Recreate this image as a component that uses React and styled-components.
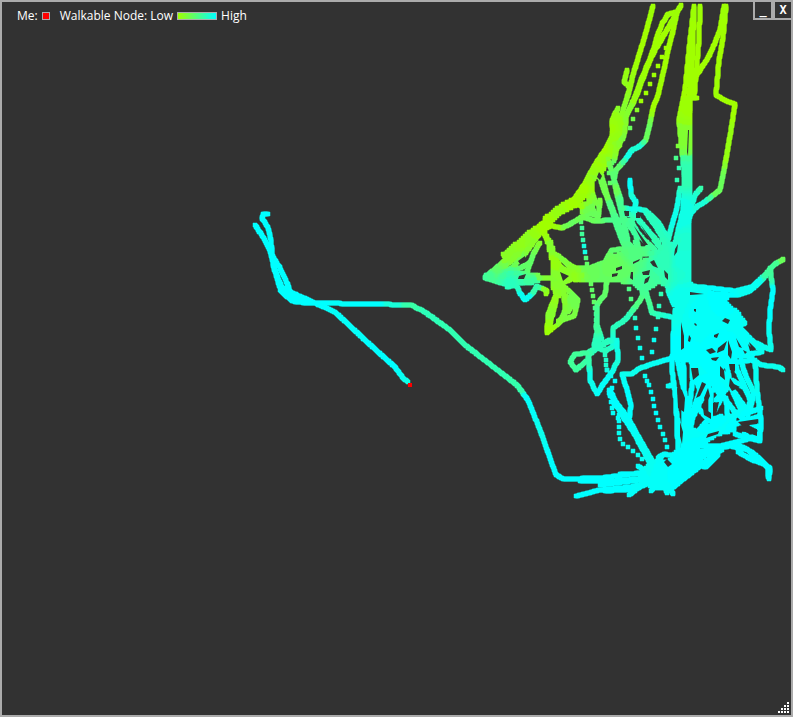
import React from "react";
import styled, { createGlobalStyle } from "styled-components";

const FRAME = "#ababab";
const BACKDROP = "#323232";

/* Height samples on the map: x, y, height (0 = low, 1 = high). */
const HEIGHTS = [
  [653, 50, 0], [690, 50, 0], [725, 50, 0], [735, 104, 0], [727, 150, 0.08], [720, 190, 0.35],
  [700, 205, 0.85], [690, 110, 0.03], [684, 90, 0], [686, 140, 0.2], [686, 170, 0.7], [686, 210, 0.9],
  [670, 215, 0.92], [655, 100, 0], [647, 138, 0.35], [640, 146, 0.85], [628, 155, 0.9],
  [616, 150, 0.12], [606, 150, 0], [615, 165, 0.4],
  [614, 178, 0.45], [612, 130, 0.03], [600, 165, 0.03], [585, 190, 0], [575, 205, 0],
  [545, 225, 0], [520, 245, 0.1], [505, 255, 0.15], [495, 268, 0.4], [485, 277, 0.6],
  [510, 282, 0.75], [525, 299, 0.95], [537, 286, 0.7], [547, 291, 0.1], [545, 277, 0.2],
  [530, 262, 0.4], [556, 262, 0.05], [556, 300, 0.1], [547, 333, 0.02], [575, 300, 0.3],
  [572, 315, 0.25], [562, 258, 0.25], [590, 270, 0.35], [575, 275, 0.1], [590, 215, 0.35],
  [600, 200, 0.25], [610, 190, 0.3], [612, 205, 0.5], [620, 222, 0.55], [630, 182, 0.98], [634, 205, 0.9],
  [584, 232, 0.6], [585, 250, 0.9], [588, 262, 0.4], [595, 290, 0.4], [597, 320, 0.6],
  [600, 345, 0.75], [625, 270, 0.4], [612, 266, 0.35], [640, 255, 0.5], [635, 300, 0.5],
  [625, 320, 0.75], [645, 285, 0.6], [660, 260, 0.72], [680, 260, 0.85], [650, 225, 0.75],
  [680, 300, 0.92], [700, 310, 0.97], [720, 300, 1], [750, 285, 0.95], [772, 265, 0.6],
  [784, 259, 0.35], [772, 300, 1], [576, 355, 0.6], [570, 365, 0.6], [590, 380, 0.92],
  [620, 345, 0.9], [610, 390, 1], [650, 350, 0.95], [636, 330, 0.9], [640, 400, 1],
  [680, 350, 1], [720, 350, 1], [411, 305, 0.65], [425, 312, 0.72], [460, 338, 0.7],
  [395, 305, 0.85], [370, 304, 1], [517, 385, 0.68], [500, 370, 0.7], [480, 355, 0.7],
  [530, 402, 0.98], [300, 300, 1], [270, 230, 1], [380, 355, 1], [560, 470, 1],
  [600, 480, 1], [700, 400, 1], [700, 470, 1], [760, 440, 1],
];

/* Parts so often walked that the nodes form one surface. */
const FIELDS = [
  "683,200 690,200 690,283 705,291 728,295 726,303 738,312 745,323 738,330 742,345 748,356 735,358 722,368 712,372 700,372 690,362 684,362 677,360 674,330 675,312 676,300 668,288 660,282 650,288 640,290 634,284 622,282 605,280 580,282 575,272 600,266 612,256 626,252 640,262 655,256 667,250 678,238",
  "486,275 498,271 525,272 540,275 540,281 530,284 512,284",
  "503,254 530,231 543,222 552,226 543,232 526,244 508,258",
  "543,219 563,203 574,198 586,183 592,180 590,192 576,206 560,214 549,224",
  "543,228 552,243 558,264 562,285 558,300 552,286 552,262",
  "596,164 611,145 613,115 622,113 622,130 616,148 604,170 594,180 584,190",
  "682,120 690,90 691,210 684,210",
  "638,475 652,462 668,462 678,448 694,450 702,456 700,468 688,476 672,484 662,490 650,486",
  "690,360 720,366 728,380 722,400 712,384 704,390 692,378",
  "700,430 722,418 735,418 735,430 715,436 702,446 690,456 684,450",
  "656,222 664,230 670,242 676,252 666,254",
];

/* Small untouched spots inside the walked ground. */
const GAPS = [
  "664,270 668,274 668,280 665,277", "675,249 678,244 677,252 674,256", "642,272 650,270 649,275 643,275",
  "631,272 633,272 633,280 630,278", "645,279 650,276 648,282 644,284",
  "681,322 684,336 684,348 681,350", "689,335 691,338 690,342 688,341", "725,318 730,320 728,324 722,321",
  "714,335 719,333 717,338 714,337", "706,350 712,348 716,352 710,354", "718,348 727,341 724,350 717,353",
  "711,358 719,357 716,361 712,360", "728,340 732,352 731,359 728,355", "691,368 698,368 699,375 693,380",
  "720,366 724,370 725,380 720,376", "694,309 696,309 696,312 694,311", "695,323 697,325 696,326 694,324",
  "667,459 672,464 668,467 664,462", "708,434 719,431 718,434 706,438", "616,268 622,266 622,269 616,271",
  "612,274 618,273 617,276 612,277", "519,276 526,274 524,279 518,279",
  "599,172 602,176 600,180 597,177", "688,130 689,130 688,156 687,152", "650,262 654,260 658,268 653,266",
  "560,272 569,276 563,281", "518,261 525,256 526,262 520,264", "554,318 556,316 556,323 553,325",
  "677,388 682,390 685,398 684,412 678,408", "729,364 735,364 735,371 730,370", "730,378 734,384 740,387 732,391 729,386",
  "702,382 706,384 700,396 696,398", "743,431 757,429 757,436", "738,422 758,419 757,424 742,426",
  "703,408 711,413 711,419 704,415", "713,403 719,402 716,415 713,416",
  "624,211 629,211 629,216 625,216", "636,213 640,213 640,218 636,218", "634,226 648,245 644,245",
  "645,218 655,230 653,231", "640,224 652,240 650,240", "633,262 640,259 639,261 633,264",
  "736,338 742,348 739,347", "748,344 754,350 750,351", "743,350 747,352 745,354",
  "680,422 683,432 682,444 680,436", "708,388 710,396 706,404 704,398", "690,292 704,294 690,295",
];

/* Walked trails, one chain of map positions each. */
const TRAILS = [
  "653,6 647,29 640,52 633,75 628,95 623,110 618,128 612,150", "627,70 624,82 630,87 625,105",
  "681,5 677,12 668,14 662,24 657,37 654,48 648,65 641,80 633,103 625,118 614,142 600,165",
  "677,12 670,25 658,44 650,60 643,78 637,95 625,118 618,135",
  "677,12 664,35 655,50 646,68 638,90 628,112",
  "677,12 672,35 668,50 664,70 658,95 653,108 649,128 646,140 640,146 632,150 625,160 616,170",
  "694,6 689,50 685,90 679,120 682,150 685,180 685,260", "694,6 693,50 689,120 688,180 687,250",
  "694,12 692,60 689,95 689,140 688,240", "700,6 699,40 696,75 694,98 697,98", "694,98 684,98 681,125",
  "724,6 720,30 714,45 708,58 700,70 695,78", "726,6 723,38 719,60 716,95 726,101 735,104 731,130 725,165 720,190 711,197 703,203 695,208 690,215",
  "701,188 695,195 692,205 688,225", "680,188 677,208 672,225 668,240", "686,180 683,210 676,240",
  "618,108 612,120 613,135 605,150 595,165 584,185 575,198 560,212 545,222 533,232 518,245 503,256",
  "626,118 625,130 623,138 617,146 614,162", "620,145 600,165 592,180 592,198 600,206",
  "630,180 631,195 636,202 634,213 632,222", "600,170 607,195 615,215 625,240 632,252 630,265",
  "608,160 613,175 616,190 622,215 628,240", "616,170 614,180 621,200 622,215 636,235 640,258",
  "596,165 604,190 610,205 618,230 627,252", "588,188 590,205 598,218 600,200",
  "620,208 635,209 645,210 658,222 668,238", "622,213 636,216 650,234 662,250", "630,220 640,236 655,250",
  "645,211 670,248", "633,212 640,222 660,244", "582,217 595,221 612,220 622,220 626,224",
  "580,218 590,212 595,200 590,188", "570,202 580,205 588,214 600,215", "576,205 590,204 582,212",
  "543,228 552,226 562,228 572,223 582,217 590,210", "590,195 587,212",
  "485,277 500,265 520,245 543,228", "485,277 510,262 530,240 545,228", "485,277 512,268 526,252 540,233",
  "485,277 500,270 518,255 540,230", "527,272 533,255 540,242", "485,277 520,268 531,262",
  "485,277 510,275 528,278 548,278 565,280", "485,278 505,284 530,282 540,278", "507,287 516,285 520,293 525,300 533,293 537,286 547,291 546,295",
  "541,228 550,245 556,265 558,285 556,300 552,318 547,333", "557,255 565,262 575,268 590,268 605,262 612,250 622,249 630,255",
  "554,270 558,290 548,315 547,333", "556,285 570,280 578,270 600,270", "554,260 570,276 558,281",
  "562,285 575,297 578,300 574,316 562,320 547,333", "564,288 565,315", "572,295 562,318 555,324", "558,290 574,303 568,312",
  "560,268 575,273 590,278 610,277 630,270", "556,260 562,270 560,285", "564,260 574,272",
  "607,280 605,295 600,300 597,305 597,325 602,340", "575,280 600,266 640,264 680,262", "610,270 640,250 660,256",
  "632,252 645,254 658,252 668,262", "635,242 640,250 634,262", "625,240 635,250 650,248",
  "640,280 643,295 637,305 625,320 613,328 613,340 600,345 588,353 575,354 570,362 576,370 590,358",
  "645,288 652,313 672,317", "668,290 674,305", "597,332 594,346 605,351 615,345 610,340 598,346",
  "596,325 599,345", "617,340 618,360 612,372 604,383 597,394 590,380 589,360", "599,346 588,356 590,372",
  "610,390 622,415 635,435 651,465", "609,393 628,418 645,450 655,465", "613,402 632,425 656,468",
  "685,355 665,360 640,368 632,374 622,374 627,390 631,405 629,420",
  "690,286 710,288 735,291 752,287 765,275 775,264 784,259", "690,290 715,294 738,295 750,291 762,280 772,268",
  "770,268 773,290 770,310 769,330 771,350 760,345 748,339 740,330", "725,303 737,318 745,323 738,326",
  "742,330 756,345 762,352 750,354", "738,336 752,360 762,365 778,367 784,370", "728,318 745,340 752,358",
  "755,360 757,390 761,420 760,440 748,438 735,434", "752,360 730,363 704,367",
  "675,310 673,340 672,370 676,400 678,450", "681,350 684,370 684,420 682,460", "678,362 686,400 688,460",
  "673,385 668,386", "690,350 694,370 689,410 683,460", "694,375 700,390 690,420 684,455",
  "704,375 700,400 692,420 688,450", "706,380 698,408 705,416 716,424", "721,378 710,384 700,402",
  "711,390 711,420 722,416", "711,390 726,390", "722,372 734,392 744,406 748,416", "712,365 718,390 735,412 745,420",
  "724,345 728,370 730,386", "734,355 737,370 744,385 750,400 748,414 734,412", "732,380 745,388 752,402",
  "741,360 745,374 754,393 750,410", "716,400 730,385 741,410", "723,396 708,420 690,440",
  "726,398 728,420 734,430", "700,436 718,420 750,412 762,408", "692,450 706,433 730,426 760,416",
  "680,476 700,452 720,446 745,440 760,434", "700,446 725,446 736,444 752,452 761,460 768,468 768,478",
  "690,458 708,450 730,446 748,450 758,460 770,468 769,479", "744,434 752,439 761,441", "738,452 752,460 765,464",
  "672,488 700,466 718,452", "689,468 705,455 722,450", "692,464 706,467 718,455 716,450", "742,418 760,428",
  "676,412 682,440 690,470", "694,430 690,460", "556,475 563,479 600,478 640,473 660,472",
  "580,481 610,481 650,478 670,475", "576,496 600,490 630,487 660,480", "600,485 640,480 670,465", "605,491 635,489 655,480",
  "629,495 638,488 655,480", "638,466 650,473 668,486 674,495", "658,458 664,454 680,457", "651,491 665,470",
  "660,466 658,487", "667,493 660,475", "664,454 655,464 640,478", "620,474 650,473", "556,475 540,430 528,400 517,385 465,345 450,330 425,312 411,305 370,304 310,303",
  "310,303 295,302 285,295 279,285 273,265 271,240 268,228 262,218 263,214 268,214",
  "255,225 265,240 272,255 280,268 288,285 290,292 315,303 335,312 365,340 395,367 403,378 408,382",
  "271,255 275,270 282,288 295,296 310,303", "280,290 292,301 300,302", "284,288 300,298",
];

/* Trails walked fast: the distance between nodes, then the positions. */
const SPARSE = [
  [9.8, "666,48 662,57 637,111 629,130"], [10, "612,163 609,173 610,183"],
  [6, "581,222 583,238 587,264"], [6, "590,278 594,302 597,325"], [10, "629,289 642,358"],
  [11.7, "661,294 652,355"], [5, "645,376 649,386"], [7.2, "651,392 658,420 668,450"],
  [5, "604,345 607,372"], [7, "607,370 615,381 611,392"], [6, "609,390 613,413 618,418"],
  [6, "619,415 619,435 622,443 635,452 645,462"], [12, "678,146 676,158 680,162 678,174 676,186"],
];

const parse = (text) => text.split(" ").map((pair) => pair.split(",").map(Number));

function heightAt(x, y) {
  let sum = 0;
  let total = 0;
  for (const [px, py, height] of HEIGHTS) {
    const distance = (px - x) ** 2 + (py - y) ** 2 + 9;
    const weight = 1 / distance ** 2;
    sum += height * weight;
    total += weight;
  }
  return sum / total;
}

function walk(points, step) {
  const nodes = [];
  let carry = 0;
  for (let i = 1; i < points.length; i += 1) {
    const [ax, ay] = points[i - 1];
    const [bx, by] = points[i];
    const length = Math.hypot(bx - ax, by - ay);
    let at = carry;
    while (at <= length) {
      nodes.push([ax + ((bx - ax) * at) / length, ay + ((by - ay) * at) / length]);
      at += step;
    }
    carry = at - length;
  }
  return nodes;
}

function inside(polygon, x, y) {
  let hit = false;
  for (let i = 0, j = polygon.length - 1; i < polygon.length; j = i, i += 1) {
    const [ax, ay] = polygon[i];
    const [bx, by] = polygon[j];
    if (ay > y !== by > y && x < ((bx - ax) * (y - ay)) / (by - ay) + ax) hit = !hit;
  }
  return hit;
}

function fill(polygon) {
  const xs = polygon.map((p) => p[0]);
  const ys = polygon.map((p) => p[1]);
  const nodes = [];
  for (let y = Math.min(...ys); y <= Math.max(...ys); y += 2) {
    for (let x = Math.min(...xs); x <= Math.max(...xs); x += 2) {
      if (inside(polygon, x, y)) nodes.push([x, y]);
    }
  }
  return nodes;
}

const LEVELS = 40;
const NODE_SIZE = 4;

function layers(nodes) {
  const groups = new Map();
  for (const [x, y] of nodes) {
    const level = Math.round(heightAt(x, y) * LEVELS);
    const square = `M${Math.round(x) - 2} ${Math.round(y) - 2}h${NODE_SIZE}v${NODE_SIZE}h-${NODE_SIZE}z`;
    if (!groups.has(level)) groups.set(level, new Set());
    groups.get(level).add(square);
  }
  return [...groups].map(([level, squares]) => {
    const t = level / LEVELS;
    return {
      color: `rgb(${Math.round(160 * (1 - t))}, 255, ${Math.round(255 * t)})`,
      path: [...squares].join(""),
    };
  });
}

const nodeLayers = layers([
  ...FIELDS.flatMap((text) => fill(parse(text))),
  ...TRAILS.flatMap((text) => walk(parse(text), 1)),
  ...SPARSE.flatMap(([step, text]) => walk(parse(text), step)),
]);

const GlobalStyle = createGlobalStyle`
  * { box-sizing: border-box; }
  body { margin: 0; background: ${BACKDROP}; }
`;

const Window = styled.main`
  display: grid;
  grid-template: minmax(0, 1fr) / minmax(0, 1fr);
  height: 100vh;
  border: 2px solid ${FRAME};
  background: ${BACKDROP};
  color: #fff;
  font: 12px/16px "Open Sans", "Noto Sans", sans-serif;
  overflow: hidden;
`;

const NodeMap = styled.svg`
  grid-area: 1 / 1;
  display: block;
  width: 100%;
  height: 100%;
`;

const NodeLayer = styled.path`
  stroke: ${(p) => p.fill};
  stroke-width: 0.5;
`;

const TopBar = styled.header`
  grid-area: 1 / 1;
  align-self: start;
  display: flex;
  justify-content: space-between;
  z-index: 1;
`;

const Legend = styled.div`
  display: flex;
  align-items: center;
  padding: 6px 0 0 15px;
  gap: 10px;
`;

const LegendItem = styled.div`
  display: flex;
  align-items: center;
  gap: 4px;
  white-space: nowrap;
`;

const Swatch = styled.span`
  width: ${(p) => (p.$wide ? 40 : 8)}px;
  height: 8px;
  border: 1px solid ${FRAME};
  background: ${(p) => p.$fill};
`;

const Controls = styled.div`
  display: flex;
  margin: -2px -2px 0 0;
`;

const ControlButton = styled.button`
  display: flex;
  align-items: center;
  justify-content: center;
  width: 20px;
  height: 20px;
  padding: 0;
  border: 2px solid ${FRAME};
  background: ${BACKDROP};
  color: #fff;
  font: bold 12px/16px "DejaVu Sans Mono", monospace;
`;

const Grip = styled.svg`
  grid-area: 1 / 1;
  place-self: end;
  margin: 0 2px 2px 0;
  shape-rendering: crispEdges;
`;

const GRIP_DOTS = [0, 1, 2, 3].flatMap((row) =>
  Array.from({ length: row + 1 }, (_, i) => [9 - i * 3, row * 3])
);

export default function App() {
  return (
    <>
      <GlobalStyle />
      <Window>
        <NodeMap viewBox="2 2 789 713" preserveAspectRatio="xMinYMin meet" role="img" aria-label="Walkable nodes">
          {nodeLayers.map(({ color, path }) => (
            <NodeLayer key={color} d={path} fill={color} />
          ))}
          {GAPS.map((points) => (
            <polygon key={points} points={points} fill={BACKDROP} />
          ))}
          <rect x="408" y="383" width="4" height="4" fill="#f00" />
        </NodeMap>
        <TopBar>
          <Legend>
            <LegendItem>
              Me: <Swatch $fill="#f00" />
            </LegendItem>
            <LegendItem>
              Walkable Node: Low <Swatch $wide $fill="linear-gradient(90deg, #a0ff00, #00ffff)" /> High
            </LegendItem>
          </Legend>
          <Controls>
            <ControlButton type="button" aria-label="Minimize">_</ControlButton>
            <ControlButton type="button" aria-label="Close">X</ControlButton>
          </Controls>
        </TopBar>
        <Grip width="11" height="11" viewBox="0 0 11 11" aria-hidden="true">
          {GRIP_DOTS.map(([x, y]) => (
            <rect key={`${x}-${y}`} x={x} y={y} width="2" height="2" fill="#fff" />
          ))}
        </Grip>
      </Window>
    </>
  );
}
